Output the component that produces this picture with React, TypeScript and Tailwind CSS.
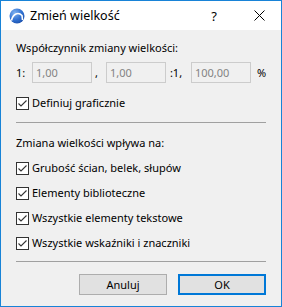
import React from "react"

function Check({ label }: { label: string }) {
    return (
        <div className="flex items-center h-[16px]">
            <div className="w-[13px] h-[13px] border border-[#333333] bg-white flex items-center justify-center">
                <svg width="11" height="11" viewBox="0 0 11 11">
                    <path d="M1.5 5.5 L4 8 L9.5 2.5" fill="none" stroke="#333333" strokeWidth="1.1" />
                </svg>
            </div>
            <span className="ml-[3px]">{label}</span>
        </div>
    )
}

function Field({ value, width }: { value: string; width: string }) {
    return (
        <div className={`${width} h-[21px] border border-[#cccccc] bg-[#f0f0f0] pl-[3px] flex items-center text-[#838383]`}>
            {value}
        </div>
    )
}

function AppIcon() {
    return (
        <svg width="16" height="16" viewBox="0 0 16 16">
            <defs>
                <radialGradient id="ball" cx="0.35" cy="0.3" r="0.8">
                    <stop offset="0" stopColor="#7fb2f0" />
                    <stop offset="0.6" stopColor="#2f6fd0" />
                    <stop offset="1" stopColor="#1b4ea8" />
                </radialGradient>
            </defs>
            <circle cx="8" cy="8" r="7.5" fill="url(#ball)" />
            <path d="M2.5 12.5 C4 6, 9 3.5, 13 7.5 L13.5 12" fill="none" stroke="#ffffff" strokeWidth="1.6" />
        </svg>
    )
}

export default function App() {
    return (
        <div className="w-[282px] h-[307px] border border-[#1883d7] bg-[#f0f0f0] flex flex-col text-[11px] leading-[16px] text-black" style={{ fontFamily: '"Noto Sans", sans-serif' }}>
            <div className="h-[29px] bg-white flex items-center pl-[8px] pr-[16px]">
                <AppIcon />
                <span className="ml-[5px] text-[12.5px]">Zmień wielkość</span>
                <span className="ml-auto text-[13px] mr-[37px]">?</span>
                <svg width="11" height="11" viewBox="0 0 11 11">
                    <path d="M0.5 0.5 L10.5 10.5 M10.5 0.5 L0.5 10.5" stroke="#000000" strokeWidth="1" />
                </svg>
            </div>

            <div className="flex flex-col px-[15px] pt-[10px]">
                <div>Współczynnik zmiany wielkości:</div>

                <div className="flex items-center mt-[6px]">
                    <span className="w-[16px]">1:</span>
                    <Field value="1,00" width="w-[60px]" />
                    <span className="w-[14px] pl-[3px]">,</span>
                    <Field value="1,00" width="w-[60px]" />
                    <span className="w-[25px] pl-[4px]">:1,</span>
                    <Field value="100,00" width="w-[60px]" />
                    <span className="pl-[6px]">%</span>
                </div>

                <div className="mt-[12px]">
                    <Check label="Definiuj graficznie" />
                </div>

                <div className="h-px bg-[#a0a0a0] mt-[11px]" />

                <div className="mt-[12px]">Zmiana wielkości wpływa na:</div>

                <div className="flex flex-col gap-[9px] mt-[9px]">
                    <Check label="Grubość ścian, belek, słupów" />
                    <Check label="Elementy biblioteczne" />
                    <Check label="Wszystkie elementy tekstowe" />
                    <Check label="Wszystkie wskaźniki i znaczniki" />
                </div>

                <div className="h-px bg-[#a0a0a0] mt-[10px]" />

                <div className="flex justify-end gap-[11px] mt-[12px]">
                    <button className="w-[88px] h-[21px] bg-[#e1e1e1] border border-[#adadad] flex items-center justify-center">Anuluj</button>
                    <button className="w-[88px] h-[21px] bg-[#e1e1e1] border-2 border-[#0078d7] flex items-center justify-center">OK</button>
                </div>
            </div>
        </div>
    )
}
